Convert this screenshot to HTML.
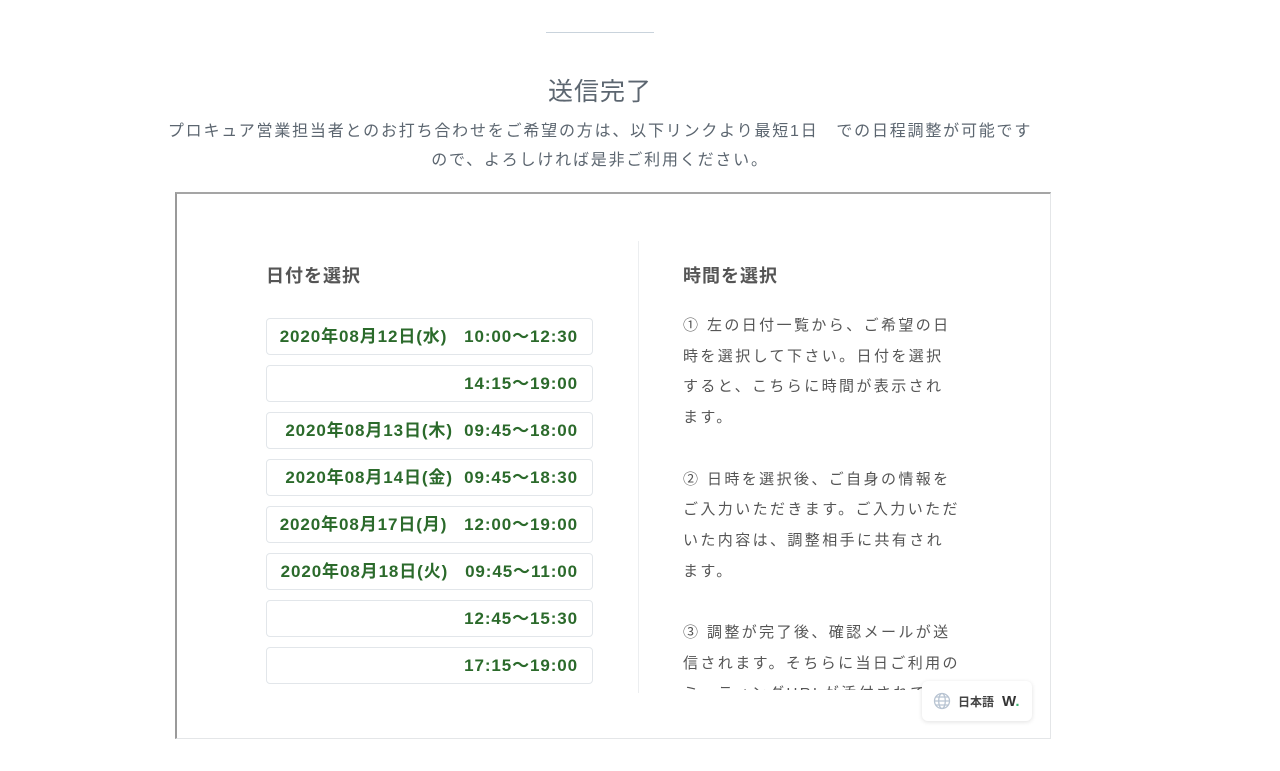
<!DOCTYPE html>
<html><head><meta charset="utf-8"><style>
*{margin:0;padding:0;box-sizing:border-box}
body{width:1280px;height:771px;background:#fff;font-family:"Liberation Sans","Noto Sans CJK JP",sans-serif;position:relative;overflow:hidden;color:#5a6169}
.hr{position:absolute;left:546px;top:32px;width:108px;height:1px;background:#c9d3dc}
h1{position:absolute;left:0;width:1200px;top:72px;text-align:center;font-size:25px;font-weight:400;color:#5c6670;letter-spacing:1px}
.sub{position:absolute;left:150px;width:900px;top:117px;text-align:center;font-size:16px;line-height:29px;color:#5c6670;letter-spacing:1.8px}
.box{position:absolute;left:175px;top:192px;width:876px;height:547px;border:1px solid #e4e6e8;border-left:2px solid #9a9a9a;border-top:2px solid #a5a5a5;overflow:hidden}
.h{position:absolute;font-size:18px;font-weight:700;color:#555;top:68px;letter-spacing:1px}
.btn{position:absolute;left:89px;width:327px;height:37px;border:1px solid #e2e6ea;border-radius:4px;color:#2b6a2b;font-weight:700;font-size:17px;line-height:35px;text-align:right;padding-right:14px;white-space:pre;letter-spacing:0.9px}
.div{position:absolute;left:461px;top:47px;width:1px;height:452px;background:#eceef0}
.txt{position:absolute;left:506px;top:117px;width:285px;height:379px;overflow:hidden;font-size:15px;line-height:30.7px;color:#555;letter-spacing:2.4px}
.lang{position:absolute;left:922px;top:681px;width:110px;height:40px;background:#fff;border-radius:6px;box-shadow:0 1px 5px rgba(0,0,0,.12);font-size:12px;font-weight:700;color:#444;display:flex;align-items:center;padding-left:11px}
</style></head><body>
<div class="hr"></div>
<h1>送信完了</h1>
<div class="sub">プロキュア営業担当者とのお打ち合わせをご希望の方は、以下リンクより最短1日　での日程調整が可能です<br>ので、よろしければ是非ご利用ください。</div>
<div class="box">
<div class="h" style="left:89px">日付を選択</div>
<div class="btn" style="top:124px">2020年08月12日(水)   10:00〜12:30</div>
<div class="btn" style="top:171px">14:15〜19:00</div>
<div class="btn" style="top:218px">2020年08月13日(木)  09:45〜18:00</div>
<div class="btn" style="top:265px">2020年08月14日(金)  09:45〜18:30</div>
<div class="btn" style="top:312px">2020年08月17日(月)   12:00〜19:00</div>
<div class="btn" style="top:359px">2020年08月18日(火)   09:45〜11:00</div>
<div class="btn" style="top:406px">12:45〜15:30</div>
<div class="btn" style="top:453px">17:15〜19:00</div>
<div class="div"></div>
<div class="h" style="left:506px">時間を選択</div>
<div class="txt">① 左の日付一覧から、ご希望の日<br>時を選択して下さい。日付を選択<br>すると、こちらに時間が表示され<br>ます。<br><br>② 日時を選択後、ご自身の情報を<br>ご入力いただきます。ご入力いただ<br>いた内容は、調整相手に共有され<br>ます。<br><br>③ 調整が完了後、確認メールが送<br>信されます。そちらに当日ご利用の<br>ミーティングURLが添付されて</div>
</div>
<div class="lang"><svg width="18" height="18" viewBox="0 0 18 18" fill="none" stroke="#b8c4d2" stroke-width="1.3"><circle cx="9" cy="9" r="7.5"/><ellipse cx="9" cy="9" rx="3.3" ry="7.5"/><path d="M1.5 9h15M3 5h12M3 13h12"/></svg><span style="margin-left:7px">日本語</span><span style="margin-left:8px;font-size:15px;font-weight:900;color:#333">W<span style="color:#3cb371">.</span></span></div>
</body></html>
